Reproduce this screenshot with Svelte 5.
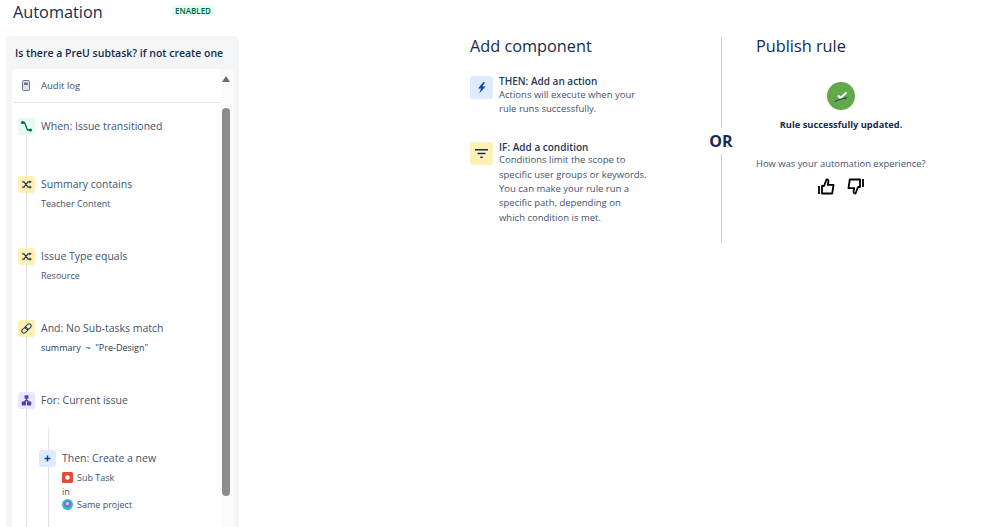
<script>
  const steps = [
    { kind: "green", icon: "branch", title: "When: Issue transitioned", height: 58 },
    { kind: "yellow", icon: "shuffle", title: "Summary contains", sub: "Teacher Content", height: 72 },
    { kind: "yellow", icon: "shuffle", title: "Issue Type equals", sub: "Resource", height: 72 },
    { kind: "yellow", icon: "link", title: "And: No Sub-tasks match", sub: 'summary ~ "Pre-Design"', query: true, height: 72 },
    { kind: "purple", icon: "tree", title: "For: Current issue", height: 28 }
  ];
</script>

{#snippet stepIcon(name)}
  {#if name === "branch"}
    <svg viewBox="0 0 17 17" width="17" height="17">
      <path d="M4.5 4.5 H6.5 L9.5 12 H12.5" fill="none" stroke="#006644" stroke-width="1.3" />
      <circle cx="4.5" cy="4.5" r="1.5" fill="#006644" />
      <circle cx="12.5" cy="12" r="1.5" fill="#006644" />
    </svg>
  {:else if name === "shuffle"}
    <svg viewBox="0 0 17 17" width="17" height="17">
      <path d="M4 5.8 H6 L10 11.2 H12.5 M4 11.2 H6 L10 5.8 H12.5" fill="none" stroke="#253858" stroke-width="1.2" />
      <path d="M11.5 4.2 L13.8 5.8 L11.5 7.4 Z M11.5 9.6 L13.8 11.2 L11.5 12.8 Z" fill="#253858" />
    </svg>
  {:else if name === "link"}
    <svg viewBox="0 0 17 17" width="17" height="17">
      <g fill="none" stroke="#344563" stroke-width="1.1">
        <rect x="3.6" y="8.2" width="6.4" height="4.2" rx="2.1" transform="rotate(-40 6.8 10.3)" />
        <rect x="7" y="4.6" width="6.4" height="4.2" rx="2.1" transform="rotate(-40 10.2 6.7)" />
      </g>
    </svg>
  {:else if name === "tree"}
    <svg viewBox="0 0 17 17" width="17" height="17">
      <path d="M8.5 6 V9.5 M6 10 L8.5 8 L11 10" fill="none" stroke="#5243aa" stroke-width="1.4" />
      <rect x="6.5" y="3.2" width="4" height="3.6" rx="0.7" fill="#5243aa" />
      <rect x="3.8" y="9.6" width="4.2" height="3.8" rx="0.7" fill="#5243aa" />
      <rect x="9" y="9.6" width="4.2" height="3.8" rx="0.7" fill="#5243aa" />
    </svg>
  {/if}
{/snippet}

<div class="page">
  <aside class="sidebar">
    <header class="top">
      <h1>Automation</h1>
      <span class="lozenge">ENABLED</span>
    </header>
    <section class="rule">
      <h2>Is there a PreU subtask? if not create one</h2>
      <div class="panel">
        <div class="list">
          <div class="audit">
            <svg viewBox="0 0 8 11" width="8" height="11">
              <rect x="0.5" y="0.5" width="7" height="10" rx="1" fill="#dfe1e6" stroke="#6b778c" />
              <path d="M2 2.5 H6 V5 H2 Z" fill="#6b778c" />
            </svg>
            <span>Audit log</span>
          </div>

          {#each steps as step}
            <div class="step" style="height: {step.height}px">
              <div class="rail">
                <div class="icon {step.kind}">{@render stepIcon(step.icon)}</div>
                <div class="line"></div>
              </div>
              <div class="text">
                <p class="title">{step.title}</p>
                {#if step.sub}<p class="sub" class:query={step.query}>{step.sub}</p>{/if}
              </div>
            </div>
          {/each}

          <div class="nested">
            <div class="nested-line"></div>
            <div class="then">
              <div class="icon blue">
                <svg viewBox="0 0 17 17" width="17" height="17">
                  <path d="M8.5 5.5 V11.5 M5.5 8.5 H11.5" stroke="#0747a6" stroke-width="1.5" />
                </svg>
              </div>
              <div class="text">
                <p class="title">Then: Create a new</p>
                <p class="sub item">
                  <svg viewBox="0 0 11 11" width="11" height="11">
                    <rect width="11" height="11" rx="1.5" fill="#e5493a" />
                    <circle cx="5.5" cy="5.5" r="2.2" fill="#fff" />
                  </svg>
                  Sub Task
                </p>
                <p class="sub">in</p>
                <p class="sub item">
                  <svg viewBox="0 0 11 11" width="11" height="11">
                    <circle cx="5.5" cy="5.5" r="5.5" fill="#2cc5c0" />
                    <circle cx="5.5" cy="5" r="3.6" fill="#7a6fc9" />
                    <circle cx="5.5" cy="4.6" r="1.6" fill="#d9d4f2" />
                  </svg>
                  Same project
                </p>
              </div>
            </div>
          </div>
        </div>
        <div class="scrollbar">
          <div class="arrow"></div>
          <div class="thumb"></div>
        </div>
      </div>
    </section>
  </aside>

  <main class="content">
    <section class="add">
      <h3>Add component</h3>
      <div class="option">
        <div class="tile blue">
          <svg viewBox="0 0 23 23" width="23" height="23">
            <path d="M13.5 6 L8 12.5 H11 L9.2 17.5 L15.5 10.5 H12.4 L15 6 Z" fill="#0747a6" />
          </svg>
        </div>
        <p><strong>THEN: Add an action</strong>Actions will execute when your<br />rule runs successfully.</p>
      </div>
      <div class="option">
        <div class="tile yellow">
          <svg viewBox="0 0 23 23" width="23" height="23">
            <path d="M5 7.8 H18 M7.5 11.5 H15.5 M10.3 15.2 H12.7" stroke="#172b4d" stroke-width="1.6" />
          </svg>
        </div>
        <p><strong>IF: Add a condition</strong>Conditions limit the scope to<br />specific user groups or keywords.<br />You can make your rule run a<br />specific path, depending on<br />which condition is met.</p>
      </div>
    </section>

    <div class="divider">
      <div class="rule-line top-line"></div>
      <span>OR</span>
      <div class="rule-line bottom-line"></div>
    </div>

    <section class="publish">
      <h3>Publish rule</h3>
      <div class="result">
        <div class="check">
          <svg viewBox="0 0 28 28" width="28" height="28">
            <path d="M11 13.5 L13.5 16 L19.5 10.5" fill="none" stroke="#fff" stroke-width="2.2" />
            <path d="M8 20 C10 17 14 17.5 20 15.5" fill="none" stroke="#253858" stroke-width="1.1" />
          </svg>
        </div>
        <p class="done">Rule successfully updated.</p>
      </div>
      <p class="ask">How was your automation experience?</p>
      <div class="votes">
        <svg viewBox="0 0 17 17" width="17" height="17">
          <path d="M1 8 V16 M4 8 H6 L8.5 1.5 C10.5 1.5 10.8 3 10.3 4.5 L9.7 6.8 H15.5 L14.2 15.5 H4 Z" fill="none" stroke="#000" stroke-width="1.8" stroke-linejoin="round" />
        </svg>
        <svg viewBox="0 0 17 17" width="17" height="17">
          <path d="M16 9 V1 M13 9 H11 L8.5 15.5 C6.5 15.5 6.2 14 6.7 12.5 L7.3 10.2 H1.5 L2.8 1.5 H13 Z" fill="none" stroke="#000" stroke-width="1.8" stroke-linejoin="round" />
        </svg>
      </div>
    </section>
  </main>
</div>

<style>
  :global(body) {
    margin: 0;
    background: #fff;
    color: #172b4d;
    font-family: "Open Sans", "Noto Sans", sans-serif;
  }
  p, h1, h2, h3 {
    margin: 0;
  }
  .page {
    display: flex;
    height: 527px;
    overflow: hidden;
  }

  .sidebar {
    width: 233px;
    margin-left: 6px;
    flex-shrink: 0;
    display: flex;
    flex-direction: column;
  }
  .top {
    height: 36px;
    display: flex;
    align-items: flex-start;
    padding-left: 7px;
  }
  h1 {
    font-size: 16.3px;
    line-height: 24px;
    font-weight: 500;
    width: 159px;
  }
  .lozenge {
    margin-top: 5px;
    padding: 0 3px;
    height: 11px;
    line-height: 11px;
    font-size: 8px;
    font-weight: 600;
    color: #006644;
    background: #e3fcef;
    border-radius: 2px;
  }
  .rule {
    flex: 1;
    min-height: 0;
    background: #f4f5f7;
    border-radius: 5px 5px 0 0;
    padding: 0 5px 0 6px;
    display: flex;
    flex-direction: column;
  }
  h2 {
    height: 33px;
    line-height: 35px;
    padding-left: 3px;
    font-size: 10.5px;
    font-weight: 600;
    white-space: nowrap;
  }
  .panel {
    flex: 1;
    min-height: 0;
    display: flex;
    background: #fff;
    border-radius: 4px 4px 0 0;
    overflow: hidden;
  }
  .list {
    width: 209px;
    flex-shrink: 0;
    padding-left: 2px;
    box-sizing: border-box;
  }
  .audit {
    height: 32px;
    padding-bottom: 1px;
    display: flex;
    align-items: center;
    border-bottom: 1px solid #e4e6ea;
    padding-left: 8px;
    gap: 11px;
    font-size: 9.5px;
    color: #42526e;
    margin-bottom: 15px;
  }
  .step {
    display: flex;
    padding-left: 4px;
    gap: 6px;
  }
  .rail {
    width: 17px;
    display: flex;
    flex-direction: column;
    align-items: center;
    flex-shrink: 0;
  }
  .line {
    flex: 1;
    width: 1px;
    background: #dfe1e6;
  }
  .icon {
    width: 17px;
    height: 17px;
    border-radius: 3px;
    flex-shrink: 0;
    display: flex;
  }
  .green { background: #e3fcef; }
  .yellow { background: #fff0b3; }
  .purple { background: #eae6ff; }
  .blue { background: #deebff; }
  .title {
    font-size: 10.5px;
    line-height: 16px;
    color: #42526e;
    white-space: nowrap;
  }
  .sub {
    font-size: 9px;
    line-height: 13.5px;
    color: #42526e;
    white-space: nowrap;
  }
  .query {
    color: #253858;
    word-spacing: 2.4px;
  }
  .title + .sub {
    margin-top: 5px;
  }
  .nested {
    position: relative;
    height: 120px;
    border-left: 1px solid #dfe1e6;
    margin-left: 12px;
  }
  .nested-line {
    width: 1px;
    height: 100%;
    margin-left: 21px;
    background: linear-gradient(#fff, #dfe1e6 16px);
  }
  .then {
    position: absolute;
    top: 30px;
    left: 12px;
    display: flex;
    gap: 6px;
  }
  .item {
    display: flex;
    align-items: center;
    gap: 4px;
  }
  .scrollbar {
    flex: 1;
    background: #fafafa;
    display: flex;
    flex-direction: column;
    align-items: center;
    padding-right: 3px;
  }
  .arrow {
    margin-top: 7px;
    border-left: 4px solid transparent;
    border-right: 4px solid transparent;
    border-bottom: 6px solid #6e6e6e;
  }
  .thumb {
    margin-top: 26px;
    width: 8px;
    height: 388px;
    border-radius: 4px;
    background: #8c8c8c;
  }

  .content {
    display: flex;
    align-items: flex-start;
    padding-left: 231px;
  }
  h3 {
    font-size: 16.3px;
    line-height: 24px;
    font-weight: 500;
  }
  .add {
    width: 238px;
    padding-top: 34px;
    flex-shrink: 0;
  }
  .option {
    display: flex;
    gap: 6px;
    margin-bottom: 25.9px;
    font-size: 9.5px;
    line-height: 14.3px;
    color: #42526e;
  }
  .option p {
    margin-top: -1px;
  }
  .add h3 {
    margin-bottom: 18px;
  }
  .option strong {
    display: block;
    font-size: 10px;
    line-height: 12.5px;
    font-weight: 600;
    color: #253858;
  }
  .tile {
    width: 23px;
    height: 23px;
    border-radius: 3px;
    flex-shrink: 0;
  }
  .divider {
    width: 26px;
    height: 206px;
    margin-top: 37px;
    display: flex;
    flex-direction: column;
    align-items: center;
    flex-shrink: 0;
  }
  .rule-line {
    width: 1px;
    background: #c9ccd3;
  }
  .top-line { height: 91px; }
  .bottom-line { flex: 1; }
  .divider span {
    font-size: 16px;
    line-height: 26px;
    font-weight: 700;
  }
  .publish {
    padding-top: 34px;
    margin-left: 22px;
    width: 170px;
  }
  .result {
    display: flex;
    flex-direction: column;
    align-items: center;
    margin-top: 24px;
  }
  .check {
    width: 28px;
    height: 28px;
    border-radius: 50%;
    background: #64a84c;
  }
  .done {
    margin-top: 8px;
    font-size: 9.3px;
    line-height: 14px;
    font-weight: 700;
    white-space: nowrap;
  }
  .ask {
    margin-top: 25px;
    font-size: 9.4px;
    line-height: 14px;
    color: #42526e;
    white-space: nowrap;
  }
  .votes {
    display: flex;
    justify-content: center;
    gap: 12px;
    margin-top: 7px;
  }
</style>
